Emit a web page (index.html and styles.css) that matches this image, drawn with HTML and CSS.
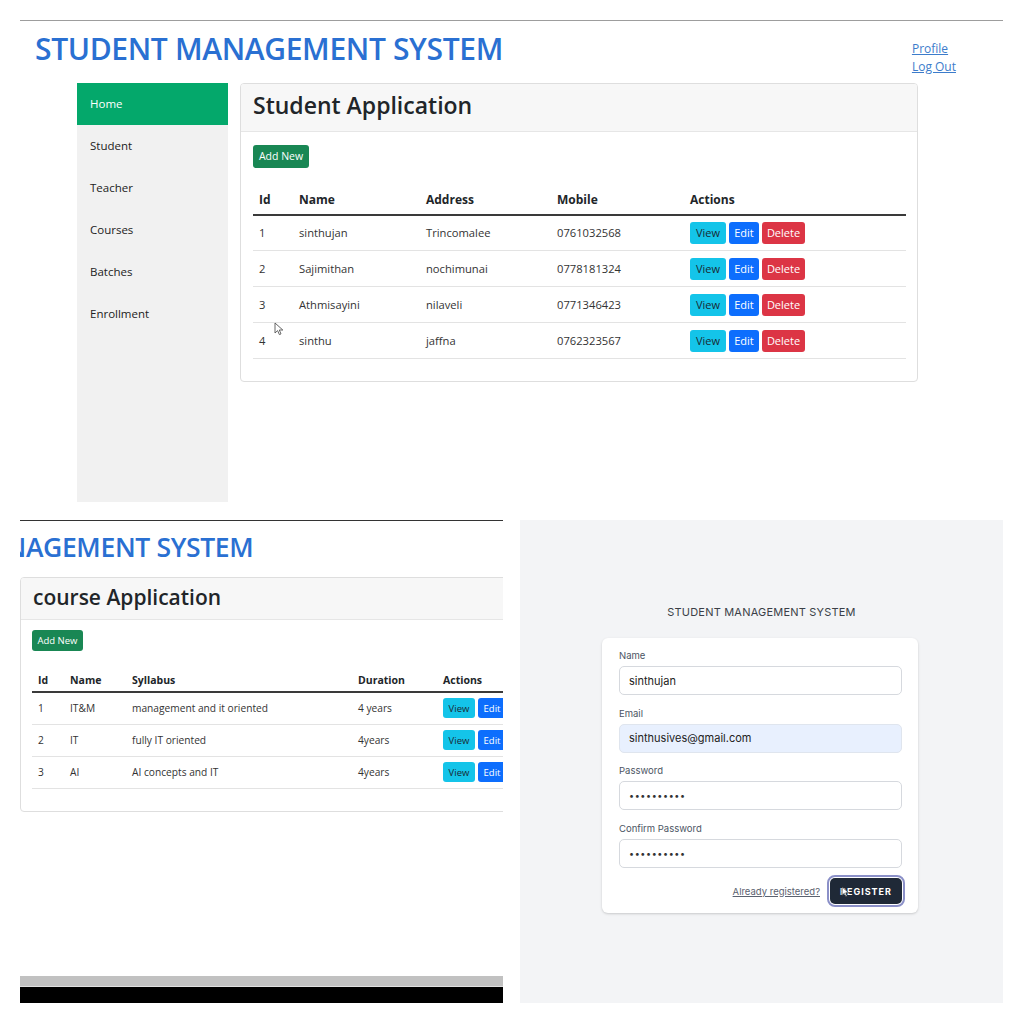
FILE: index.html
```html
<!DOCTYPE html>
<html lang="en">
<head>
<meta charset="utf-8">
<title>Student Management System</title>
<link rel="stylesheet" href="styles.css">
</head>
<body>
<main class="collage">
  <section class="panel panel-top">
    <header class="top-head">
      <h1 class="brand">STUDENT MANAGEMENT SYSTEM</h1>
      <nav class="user-links">
        <a href="#">Profile</a>
        <a href="#">Log Out</a>
      </nav>
    </header>
    <div class="top-body">
      <aside class="sidebar">
        <a class="side-item active" href="#">Home</a>
        <a class="side-item" href="#">Student</a>
        <a class="side-item" href="#">Teacher</a>
        <a class="side-item" href="#">Courses</a>
        <a class="side-item" href="#">Batches</a>
        <a class="side-item" href="#">Enrollment</a>
      </aside>
      <div class="card card-student">
        <div class="card-header">Student Application</div>
        <div class="card-body">
          <button class="btn btn-green">Add New</button>
          <table class="tbl tbl-student">
            <thead>
              <tr><th class="c1">Id</th><th class="c2">Name</th><th class="c3">Address</th><th class="c4">Mobile</th><th>Actions</th></tr>
            </thead>
            <tbody>
              <tr><td>1</td><td>sinthujan</td><td>Trincomalee</td><td>0761032568</td><td><span class="acts"><button class="btn btn-view">View</button><button class="btn btn-edit">Edit</button><button class="btn btn-del">Delete</button></span></td></tr>
              <tr><td>2</td><td>Sajimithan</td><td>nochimunai</td><td>0778181324</td><td><span class="acts"><button class="btn btn-view">View</button><button class="btn btn-edit">Edit</button><button class="btn btn-del">Delete</button></span></td></tr>
              <tr><td>3</td><td>Athmisayini</td><td>nilaveli</td><td>0771346423</td><td><span class="acts"><button class="btn btn-view">View</button><button class="btn btn-edit">Edit</button><button class="btn btn-del">Delete</button></span></td></tr>
              <tr><td>4</td><td>sinthu</td><td>jaffna</td><td>0762323567</td><td><span class="acts"><button class="btn btn-view">View</button><button class="btn btn-edit">Edit</button><button class="btn btn-del">Delete</button></span></td></tr>
            </tbody>
          </table>
        </div>
      </div>
    </div>
    <svg class="cursor cursor-top" width="10" height="14" viewBox="0 0 10 14"><path d="M1 1 L1 11 L3.6 8.6 L5.4 12.6 L7 11.9 L5.3 8 L8.8 8 Z" fill="#fff" stroke="#555" stroke-width="0.9" stroke-linejoin="round"/></svg>
  </section>

  <section class="panel panel-course">
    <div class="brand-clip"><h2 class="brand brand-small">STUDENT MANAGEMENT SYSTEM</h2></div>
    <div class="card card-course">
      <div class="card-header">course Application</div>
      <div class="card-body">
        <button class="btn btn-green">Add New</button>
        <table class="tbl tbl-course">
          <thead>
            <tr><th class="k1">Id</th><th class="k2">Name</th><th class="k3">Syllabus</th><th class="k4">Duration</th><th>Actions</th></tr>
          </thead>
          <tbody>
            <tr><td>1</td><td>IT&amp;M</td><td>management and it oriented</td><td>4 years</td><td><span class="acts"><button class="btn btn-view">View</button><button class="btn btn-edit">Edit</button><button class="btn btn-del">Delete</button></span></td></tr>
            <tr><td>2</td><td>IT</td><td>fully IT oriented</td><td>4years</td><td><span class="acts"><button class="btn btn-view">View</button><button class="btn btn-edit">Edit</button><button class="btn btn-del">Delete</button></span></td></tr>
            <tr><td>3</td><td>AI</td><td>AI concepts and IT</td><td>4years</td><td><span class="acts"><button class="btn btn-view">View</button><button class="btn btn-edit">Edit</button><button class="btn btn-del">Delete</button></span></td></tr>
          </tbody>
        </table>
      </div>
    </div>
    <div class="taskbar">
      <div class="bar-gray"></div>
      <div class="bar-black"></div>
    </div>
  </section>

  <section class="panel panel-register">
    <div class="reg-title">STUDENT MANAGEMENT SYSTEM</div>
    <form class="reg-card">
      <label class="field">
        <span class="lbl">Name</span>
        <span class="inp">sinthujan</span>
      </label>
      <label class="field">
        <span class="lbl">Email</span>
        <span class="inp inp-auto">sinthusives@gmail.com</span>
      </label>
      <label class="field">
        <span class="lbl">Password</span>
        <span class="inp inp-dots">••••••••••</span>
      </label>
      <label class="field">
        <span class="lbl">Confirm Password</span>
        <span class="inp inp-dots">••••••••••</span>
      </label>
      <div class="reg-actions">
        <a class="already" href="#">Already registered?</a>
        <span class="reg-btn">REGISTER
          <svg class="cursor cursor-reg" width="9" height="12" viewBox="0 0 10 14"><path d="M1 1 L1 11 L3.6 8.6 L5.4 12.6 L7 11.9 L5.3 8 L8.8 8 Z" fill="#fff" stroke="#222" stroke-width="0.8" stroke-linejoin="round"/></svg>
        </span>
      </div>
    </form>
  </section>
</main>
</body>
</html>
```

FILE: styles.css
```css
* { box-sizing: border-box; }
html, body { margin: 0; padding: 0; background: #fff; }
body { width: 1024px; height: 1024px; overflow: hidden; font-family: "Open Sans", "Noto Sans", sans-serif; color: #212529; }

.collage {
  display: grid;
  grid-template-columns: 483px 483px;
  grid-template-rows: 483px 483px;
  column-gap: 17px;
  row-gap: 17px;
  padding: 20px 0 0 20px;
}

.panel { position: relative; overflow: hidden; background: #fff; }

/* ---------- top panel ---------- */
.panel-top {
  grid-column: 1 / 3;
  border-top: 1px solid #9d9d9d;
}
.top-head {
  display: flex;
  justify-content: space-between;
  align-items: flex-start;
  height: 62px;
  padding: 0 47px 0 15px;
}
.brand {
  margin: 0;
  padding-top: 8px;
  font-family: "Open Sans", sans-serif;
  font-weight: 600;
  font-size: 30px;
  line-height: 40px;
  color: #2a70d2;
  letter-spacing: -0.35px;
  white-space: nowrap;
}
.user-links {
  display: flex;
  flex-direction: column;
  padding-top: 19px;
}
.user-links a {
  font-size: 12px;
  line-height: 18px;
  color: #3c7ccb;
  text-decoration: underline;
}

.top-body {
  display: flex;
  align-items: flex-start;
  gap: 12px;
  padding-left: 57px;
}
.sidebar {
  width: 151px;
  height: 419px;
  background: #f1f1f1;
  display: flex;
  flex-direction: column;
}
.side-item {
  height: 42px;
  display: flex;
  align-items: center;
  padding-left: 13px;
  padding-bottom: 1px;
  font-size: 11.5px;
  color: #222;
  text-decoration: none;
}
.side-item.active { background: #04a86b; color: #fff; }

.card {
  background: #fff;
  border: 1px solid #dedede;
  border-radius: 4px;
  overflow: hidden;
}
.card-student { width: 678px; height: 299px; }
.card-header {
  background: #f7f7f7;
  border-bottom: 1px solid #e6e6e6;
  color: #212529;
  font-weight: 600;
  white-space: nowrap;
}
.card-student .card-header {
  height: 48px;
  padding-left: 12px;
  font-size: 23px;
  line-height: 43px;
}
.card-student .card-body { padding: 11px 11px 0 12px; }

.btn {
  border: 0;
  border-radius: 3px;
  font-family: "Open Sans", sans-serif;
  padding: 0;
  display: inline-flex;
  align-items: center;
  justify-content: center;
  white-space: nowrap;
}
.btn-green { background: #198754; color: #fff; }
.btn-view { background: #14c4e9; color: #1a2a33; }
.btn-edit { background: #0d6efd; color: #fff; }
.btn-del  { background: #dc3545; color: #fff; }

.card-student .btn-green { width: 56px; height: 23px; font-size: 10.5px; }

.tbl { border-collapse: collapse; width: 100%; table-layout: fixed; }
.tbl th { text-align: left; font-weight: 700; color: #212529; }
.tbl td { color: #333; }
.tbl thead tr { border-bottom: 2px solid #3a3a3a; }
.tbl tbody tr { border-bottom: 1px solid #e3e3e3; }
.acts { display: flex; gap: 3px; }

.tbl-student { width: 653px; margin-top: 18px; font-size: 11.2px; }
.tbl-student th { font-size: 12px; }
.tbl-student th, .tbl-student td { padding: 0 6px; }
.tbl-student thead tr { height: 29px; }
.tbl-student tbody tr { height: 36px; }
.tbl-student .c1 { width: 40px; }
.tbl-student .c2 { width: 127px; }
.tbl-student .c3 { width: 131px; }
.tbl-student .c4 { width: 133px; }
.tbl-student .btn { height: 22px; font-size: 11px; }
.tbl-student .btn-view { width: 36px; }
.tbl-student .btn-edit { width: 30px; }
.tbl-student .btn-del { width: 43px; }

.cursor { position: absolute; }
.cursor-top { left: 254px; top: 301px; }

/* ---------- course panel ---------- */
.panel-course {
  border-top: 1px solid #333;
  display: flex;
  flex-direction: column;
}
.brand-clip { height: 56px; overflow: hidden; }
.brand-small {
  font-size: 26.5px;
  line-height: 34px;
  padding-top: 9px;
  margin-left: -179px;
}
.card-course {
  width: 620px;
  height: 235px;
  border-radius: 4px 0 0 4px;
}
.card-course .card-header {
  height: 42px;
  padding-left: 12px;
  font-size: 21px;
  line-height: 38px;
}
.card-course .card-body { padding: 7px 0 0 11px; }
.card-course .btn-green { width: 51px; height: 21px; font-size: 9.5px; }

.tbl-course { width: 600px; margin-top: 17px; font-size: 10.2px; }
.tbl-course th { font-size: 10.5px; }
.tbl-course th, .tbl-course td { padding: 0 6px; }
.tbl-course thead tr { height: 24px; }
.tbl-course tbody tr { height: 32px; }
.tbl-course .k1 { width: 32px; }
.tbl-course .k2 { width: 62px; }
.tbl-course .k3 { width: 226px; }
.tbl-course .k4 { width: 85px; }
.tbl-course .btn { height: 20px; font-size: 9.5px; }
.tbl-course .btn-view { width: 32px; }
.tbl-course .btn-edit { width: 28px; }
.tbl-course .btn-del { width: 40px; }

.taskbar { margin-top: auto; }
.bar-gray { height: 11px; background: #c1c1c1; border-bottom: 1px solid #e0e0e0; }
.bar-black { height: 16px; background: #000; }

/* ---------- register panel ---------- */
.panel-register {
  background: #f3f4f6;
  display: flex;
  flex-direction: column;
  align-items: center;
  font-family: "Inter", "Lato", sans-serif;
}
.reg-title {
  margin-top: 84px;
  font-size: 11px;
  line-height: 16px;
  color: #3a3f47;
  letter-spacing: 0.2px;
}
.reg-card {
  margin: 18px 3px 0 0;
  width: 316px;
  height: 275px;
  background: #fff;
  border-radius: 6px;
  box-shadow: 0 1px 3px rgba(0,0,0,0.12), 0 1px 2px rgba(0,0,0,0.06);
  padding: 12px 16px 0 17px;
  display: flex;
  flex-direction: column;
}
.field { display: flex; flex-direction: column; margin-bottom: 12.5px; }
.lbl { font-size: 9.5px; line-height: 12px; color: #4b5563; margin-bottom: 4px; }
.inp {
  height: 29px;
  border: 1px solid #d6d9de;
  border-radius: 5px;
  padding-left: 9px;
  display: flex;
  align-items: center;
  font-size: 11px;
  color: #222;
  background: #fff;
}
.inp-auto { background: #e8f0fe; border-color: #dfe5ee; }
.inp-dots { font-size: 9px; letter-spacing: 0.6px; color: #333; }

.reg-actions {
  display: flex;
  justify-content: flex-end;
  align-items: center;
  gap: 10px;
  margin-top: -2px;
}
.already { font-size: 9.5px; color: #5b6270; text-decoration: underline; }
.reg-btn {
  position: relative;
  width: 72px;
  height: 26px;
  background: #1f2937;
  color: #fff;
  border-radius: 5px;
  font-size: 9px;
  font-weight: 700;
  letter-spacing: 1px;
  display: flex;
  align-items: center;
  justify-content: center;
  outline: 2px solid #8b90c8;
  outline-offset: 1px;
}
.cursor-reg { left: 11px; top: 8px; }
```
